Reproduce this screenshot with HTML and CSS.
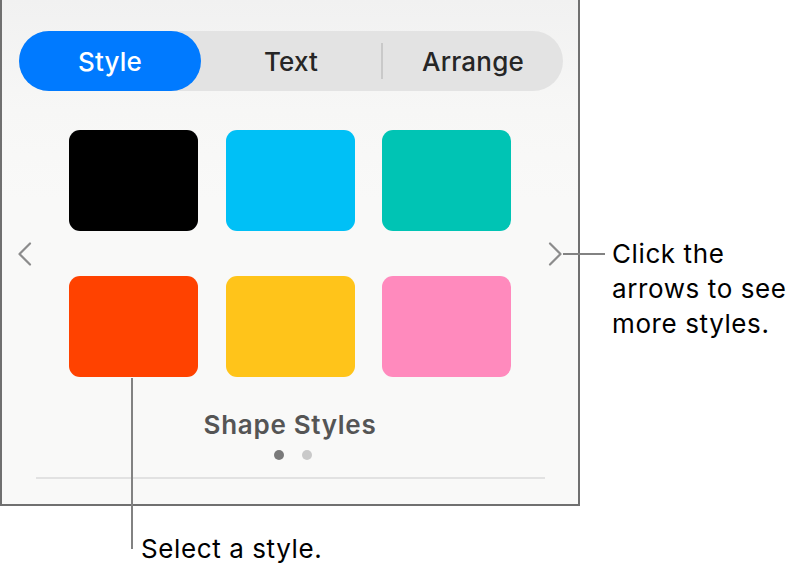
FILE: index.html
```html
<!DOCTYPE html>
<html lang="en">
<head>
<meta charset="utf-8">
<title>Shape Styles</title>
<link rel="stylesheet" href="styles.css">
</head>
<body>
<div class="canvas">
  <section class="panel">
    <div class="segmented">
      <button class="seg seg-active">Style</button>
      <button class="seg">Text</button>
      <span class="seg-divider"></span>
      <button class="seg">Arrange</button>
    </div>

    <div class="styles-row">
      <svg class="chevron" viewBox="0 0 16 24" aria-hidden="true">
        <polyline points="13,1.5 2.5,12 13,22.5" />
      </svg>
      <div class="swatches">
        <div class="swatch black"></div>
        <div class="swatch blue"></div>
        <div class="swatch teal"></div>
        <div class="swatch red"></div>
        <div class="swatch yellow"></div>
        <div class="swatch pink"></div>
      </div>
      <svg class="chevron" viewBox="0 0 16 24" aria-hidden="true">
        <polyline points="3,1.5 13.5,12 3,22.5" />
      </svg>
    </div>

    <div class="styles-label">Shape Styles</div>
    <div class="dots">
      <span class="dot dot-on"></span>
      <span class="dot"></span>
    </div>
    <div class="rule"></div>
  </section>

  <div class="leader leader-right"></div>
  <p class="note note-right">Click the<br>arrows to see<br>more styles.</p>

  <div class="leader leader-down"></div>
  <p class="note note-bottom">Select a style.</p>
</div>
</body>
</html>
```

FILE: styles.css
```css
* {
  box-sizing: border-box;
}

html, body {
  margin: 0;
  background: #ffffff;
}

body {
  font-family: Inter, "Noto Sans", "Liberation Sans", sans-serif;
  color: #000;
}

.canvas {
  position: relative;
  width: 794px;
  height: 568px;
}

/* Inspector panel */
.panel {
  width: 580px;
  height: 506px;
  border-left: 2px solid #707070;
  border-right: 2px solid #707070;
  border-bottom: 2px solid #707070;
  background: linear-gradient(#f1f1f1 0px, #f7f7f6 110px, #f9f9f8 200px);
  padding-top: 31px;
  display: flex;
  flex-direction: column;
}

.segmented {
  margin-left: 17px;
  width: 544px;
  height: 60px;
  border-radius: 30px;
  background: #e3e3e3;
  display: flex;
  align-items: center;
}

.seg {
  flex: 1 1 0;
  height: 60px;
  border: 0;
  background: transparent;
  font: 500 26px Inter, "Noto Sans", sans-serif;
  letter-spacing: 0.2px;
  color: #262626;
  padding: 0;
  border-radius: 30px;
}

.seg-active {
  flex: 0 0 182px;
  background: #007aff;
  color: #ffffff;
}

.seg-divider {
  width: 2px;
  height: 36px;
  background: #c9c9c9;
}

/* Swatch pager */
.styles-row {
  margin-top: 39px;
  padding: 0 15px;
  display: flex;
  align-items: center;
  justify-content: space-between;
}

.chevron {
  width: 16px;
  height: 24px;
  fill: none;
  stroke: #8c8c8c;
  stroke-width: 2.2;
  stroke-linecap: round;
  stroke-linejoin: round;
}

.swatches {
  display: grid;
  grid-template-columns: repeat(3, 129px);
  grid-auto-rows: 101px;
  column-gap: 27.5px;
  row-gap: 45px;
}

.swatch {
  border-radius: 11px;
}

.black  { background: #000000; }
.blue   { background: #00c0f6; }
.teal   { background: #00c4b4; }
.red    { background: #ff4200; }
.yellow { background: #ffc41a; }
.pink   { background: #ff8abd; }

.styles-label {
  margin-top: 32px;
  text-align: center;
  font-size: 26px;
  font-weight: 600;
  line-height: 32px;
  color: #555555;
  letter-spacing: 0.7px;
}

.dots {
  margin-top: 9px;
  display: flex;
  justify-content: center;
  gap: 18px;
  padding-left: 5px;
}

.dot {
  width: 10px;
  height: 10px;
  border-radius: 50%;
  background: #c9c9c9;
}

.dot-on {
  background: #7a7a7a;
}

.rule {
  margin: 17px 33px 0 34px;
  height: 2px;
  background: #e2e2e2;
}

/* Callouts */
.leader {
  position: absolute;
  background: #828282;
}

.leader-right {
  left: 563px;
  top: 253px;
  width: 42px;
  height: 2px;
}

.leader-down {
  left: 131px;
  top: 378px;
  width: 2px;
  height: 171px;
}

.note {
  position: absolute;
  margin: 0;
  font-size: 26px;
  line-height: 35px;
  letter-spacing: 0.6px;
  color: #000;
}

.note-right {
  left: 612px;
  top: 236px;
}

.note-bottom {
  left: 141px;
  top: 531px;
}
```
